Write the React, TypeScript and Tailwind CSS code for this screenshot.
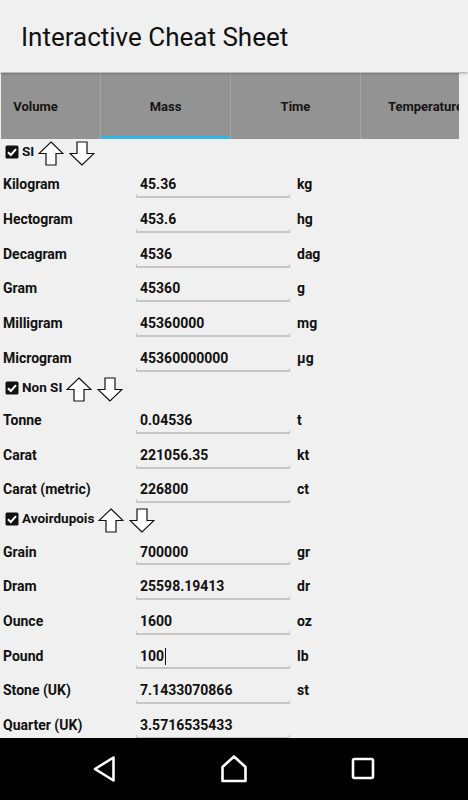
import React from "react";

type Row = { label: string; value: string; unit: string; cursor?: boolean };
type Section = { title: string; rows: Row[] };

const sections: Section[] = [
  {
    title: "SI",
    rows: [
      { label: "Kilogram", value: "45.36", unit: "kg" },
      { label: "Hectogram", value: "453.6", unit: "hg" },
      { label: "Decagram", value: "4536", unit: "dag" },
      { label: "Gram", value: "45360", unit: "g" },
      { label: "Milligram", value: "45360000", unit: "mg" },
      { label: "Microgram", value: "45360000000", unit: "µg" },
    ],
  },
  {
    title: "Non SI",
    rows: [
      { label: "Tonne", value: "0.04536", unit: "t" },
      { label: "Carat", value: "221056.35", unit: "kt" },
      { label: "Carat (metric)", value: "226800", unit: "ct" },
    ],
  },
  {
    title: "Avoirdupois",
    rows: [
      { label: "Grain", value: "700000", unit: "gr" },
      { label: "Dram", value: "25598.19413", unit: "dr" },
      { label: "Ounce", value: "1600", unit: "oz" },
      { label: "Pound", value: "100", unit: "lb", cursor: true },
      { label: "Stone (UK)", value: "7.1433070866", unit: "st" },
      { label: "Quarter (UK)", value: "3.5716535433", unit: "" },
    ],
  },
];

const tabs = ["Volume", "Mass", "Time", "Temperature"];

const Checkbox = () => (
  <svg width="14" height="14" viewBox="0 0 14 14">
    <rect x="0.5" y="0.5" width="13" height="13" rx="1.5" fill="#111" />
    <path d="M3 7.2 L5.8 10 L11 4.2" stroke="#fff" strokeWidth="2" fill="none" />
  </svg>
);

const Arrow = ({ down }: { down?: boolean }) => (
  <svg width="26" height="25" viewBox="0 0 26 25" className={down ? "rotate-180" : ""}>
    <path
      d="M13 1 L25 12.5 L18 12.5 L18 24 L8 24 L8 12.5 L1 12.5 Z"
      fill="#fff"
      stroke="#111"
      strokeWidth="1.2"
      strokeLinejoin="miter"
    />
  </svg>
);

const SectionHeader = ({ title }: { title: string }) => (
  <div className="h-[27.5px] flex items-start pl-[5px]">
    <div className="mt-[5px]">
      <Checkbox />
    </div>
    <span className="ml-[3px] mt-[3px] text-[13.5px] font-bold text-[#111] leading-[17px]">{title}</span>
    <div className="ml-[4px] mt-[1px] flex gap-[5px]">
      <Arrow />
      <Arrow down />
    </div>
  </div>
);

const FieldRow = ({ row }: { row: Row }) => (
  <div className="h-[34.7px] flex items-center">
    <span className="w-[136px] pl-[3px] text-[14px] font-bold text-[#111]">{row.label}</span>
    <div className="relative w-[154px] h-full flex items-center">
      <span className="pl-[4px] text-[14px] font-bold text-[#111] flex items-center">
        {row.value}
        {row.cursor && <span className="inline-block w-[1px] h-[17px] bg-[#111] ml-[1px]" />}
      </span>
      <div className="absolute left-0 right-0 bottom-[4px] h-[4px] border-b-2 border-l border-r border-[#c6c6c6]" />
    </div>
    <span className="pl-[7px] text-[14px] font-bold text-[#111]">{row.unit}</span>
  </div>
);

export default function App() {
  return (
    <div
      className="w-[468px] h-[800px] flex flex-col bg-[#f0f0f0] overflow-hidden"
      style={{ fontFamily: "Roboto, 'Liberation Sans', sans-serif" }}
    >
      <header className="h-[72px] shrink-0 flex items-center pl-[21px] bg-[#f0f0f0] shadow-[0_1px_3px_rgba(0,0,0,0.35)] relative z-10">
        <h1 className="text-[26px] text-[#111] mt-[2px]">Interactive Cheat Sheet</h1>
      </header>

      <div className="shrink-0 pt-[1px] pl-[1px]">
        <div className="w-[458px] h-[66px] bg-[#939393] overflow-hidden">
          <div className="flex h-full -ml-[31px]">
            {tabs.map((t, i) => (
              <div
                key={t}
                className="relative w-[130px] shrink-0 h-full flex items-center justify-center border-l border-[#a4a4a4]"
              >
                <span className="text-[13px] font-bold text-[#151515] mt-[2px]">{t}</span>
                {i === 1 && <div className="absolute left-0 right-0 bottom-0 h-[3px] bg-[#33b5e5]" />}
              </div>
            ))}
          </div>
        </div>
      </div>

      <div className="flex-1 overflow-hidden pt-[1px]">
        {sections.map((s) => (
          <div key={s.title}>
            <SectionHeader title={s.title} />
            {s.rows.map((r) => (
              <FieldRow key={r.label} row={r} />
            ))}
          </div>
        ))}
      </div>

      <nav className="h-[62px] shrink-0 bg-black flex items-center">
        <div className="flex-1 flex justify-center pl-[40px]">
          <svg width="26" height="28" viewBox="0 0 26 28">
            <path d="M21.5 2.5 L21.5 25.5 L3 14 Z" fill="none" stroke="#fff" strokeWidth="2.6" strokeLinejoin="round" />
          </svg>
        </div>
        <div className="flex-1 flex justify-center">
          <svg width="28" height="28" viewBox="0 0 28 28">
            <path d="M2.5 12 L14 1.5 L25.5 12 L25.5 26 L2.5 26 Z" fill="none" stroke="#fff" strokeWidth="2.6" strokeLinejoin="round" />
          </svg>
        </div>
        <div className="flex-1 flex justify-center pr-[40px]">
          <svg width="24" height="24" viewBox="0 0 24 24">
            <rect x="2" y="2" width="20" height="19" rx="1.5" fill="none" stroke="#fff" strokeWidth="2.6" />
          </svg>
        </div>
      </nav>
    </div>
  );
}
